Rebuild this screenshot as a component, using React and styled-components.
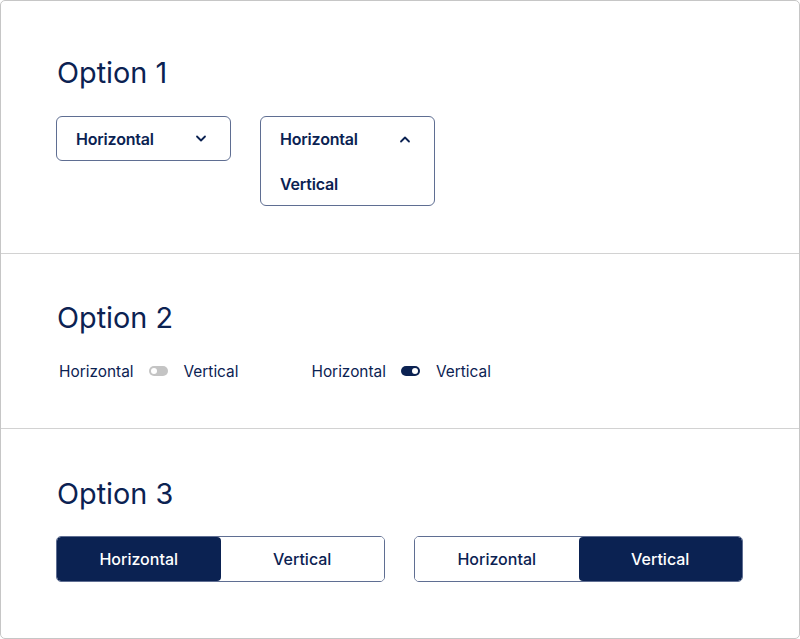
import React from "react"
import styled, { createGlobalStyle } from "styled-components"

const GlobalStyle = createGlobalStyle`
  html, body {
    margin: 0;
    padding: 0;
    background: #ffffff;
  }
  body {
    font-family: Inter, "Noto Sans", sans-serif;
    color: #0b2252;
  }
`

const Chevron = ({ up }) => (
  <svg width="12" height="8" viewBox="0 0 12 8" fill="none">
    <path
      d={up ? "M2 6.5 L6 2.5 L10 6.5" : "M2 1.5 L6 5.5 L10 1.5"}
      stroke="#0b2252"
      strokeWidth="1.8"
      strokeLinecap="round"
      strokeLinejoin="round"
    />
  </svg>
)

export default function App() {
  return (
    <>
      <GlobalStyle />
      <Card>
        <Section $height={254} $top={56} $gap={26}>
          <Title>Option 1</Title>
          <Row $gap={29}>
            <Dropdown>
              <DropHeader>
                <span>Horizontal</span>
                <Chevron />
              </DropHeader>
            </Dropdown>
            <Dropdown>
              <DropHeader>
                <span>Horizontal</span>
                <Chevron up />
              </DropHeader>
              <DropOption>Vertical</DropOption>
            </Dropdown>
          </Row>
        </Section>

        <Section $height={176} $top={48} $gap={26}>
          <Title>Option 2</Title>
          <Row $gap={70}>
            <ToggleGroup>
              <ToggleLabel>Horizontal</ToggleLabel>
              <Toggle />
              <ToggleLabel>Vertical</ToggleLabel>
            </ToggleGroup>
            <ToggleGroup>
              <ToggleLabel>Horizontal</ToggleLabel>
              <Toggle $on />
              <ToggleLabel>Vertical</ToggleLabel>
            </ToggleGroup>
          </Row>
        </Section>

        <Section $top={49} $gap={25} $last>
          <Title>Option 3</Title>
          <Row $gap={29}>
            <Segmented>
              <Segment $active>Horizontal</Segment>
              <Segment>Vertical</Segment>
            </Segmented>
            <Segmented>
              <Segment>Horizontal</Segment>
              <Segment $active>Vertical</Segment>
            </Segmented>
          </Row>
        </Section>
      </Card>
    </>
  )
}

const Card = styled.div`
  box-sizing: border-box;
  width: 800px;
  height: 639px;
  border: 1px solid #c6c6c6;
  border-radius: 5px;
  display: flex;
  flex-direction: column;
  overflow: hidden;
`

const Section = styled.div`
  box-sizing: border-box;
  ${(p) => (p.$height ? `height: ${p.$height - 1}px;` : "flex: 1;")}
  padding: ${(p) => p.$top - 1}px 0 0 55px;
  border-bottom: ${(p) => (p.$last ? "none" : "1px solid #d2d2d2")};
  display: flex;
  flex-direction: column;
  gap: ${(p) => p.$gap}px;
`

const Title = styled.h2`
  margin: 0;
  padding-left: 1px;
  font-size: 28.8px;
  line-height: 34px;
  font-weight: 400;
  color: #0b2252;
`

const Row = styled.div`
  display: flex;
  align-items: flex-start;
  gap: ${(p) => p.$gap}px;
`

const Dropdown = styled.div`
  box-sizing: border-box;
  width: 175px;
  border: 1px solid #5f6e92;
  border-radius: 6px;
  background: #fff;
`

const DropHeader = styled.div`
  height: 43px;
  display: flex;
  align-items: center;
  justify-content: space-between;
  padding: 0 23px 0 19px;
  font-size: 16px;
  font-weight: 600;
  letter-spacing: -0.2px;
  color: #0b2252;
`

const DropOption = styled.div`
  box-sizing: border-box;
  height: 45px;
  display: flex;
  align-items: center;
  padding: 2px 19px 0;
  font-size: 16px;
  font-weight: 600;
  letter-spacing: -0.2px;
  color: #0b2252;
`

const ToggleGroup = styled.div`
  display: flex;
  align-items: center;
  gap: 15px;
  height: 20px;
  padding-left: 3px;
`

const ToggleLabel = styled.span`
  font-size: 15.4px;
  font-weight: 400;
  color: #0b2252;
`

const Toggle = styled.span`
  position: relative;
  width: 19px;
  height: 10px;
  border-radius: 5px;
  background: ${(p) => (p.$on ? "#0b2252" : "#c4c4c4")};
  margin-right: 1px;

  &::after {
    content: "";
    position: absolute;
    top: 2px;
    ${(p) => (p.$on ? "right: 2px;" : "left: 2px;")}
    width: 6px;
    height: 6px;
    border-radius: 50%;
    background: #fff;
  }
`

const Segmented = styled.div`
  box-sizing: border-box;
  width: 329px;
  height: 46px;
  border: 1px solid #5f6e92;
  border-radius: 5px;
  display: flex;
  overflow: hidden;
`

const Segment = styled.div`
  flex: 1;
  display: flex;
  align-items: center;
  justify-content: center;
  font-size: 16px;
  font-weight: 500;
  background: ${(p) => (p.$active ? "#0b2252" : "#fff")};
  color: ${(p) => (p.$active ? "#fff" : "#0b2252")};
  border-radius: ${(p) => (p.$active ? "4px" : "0")};
`
